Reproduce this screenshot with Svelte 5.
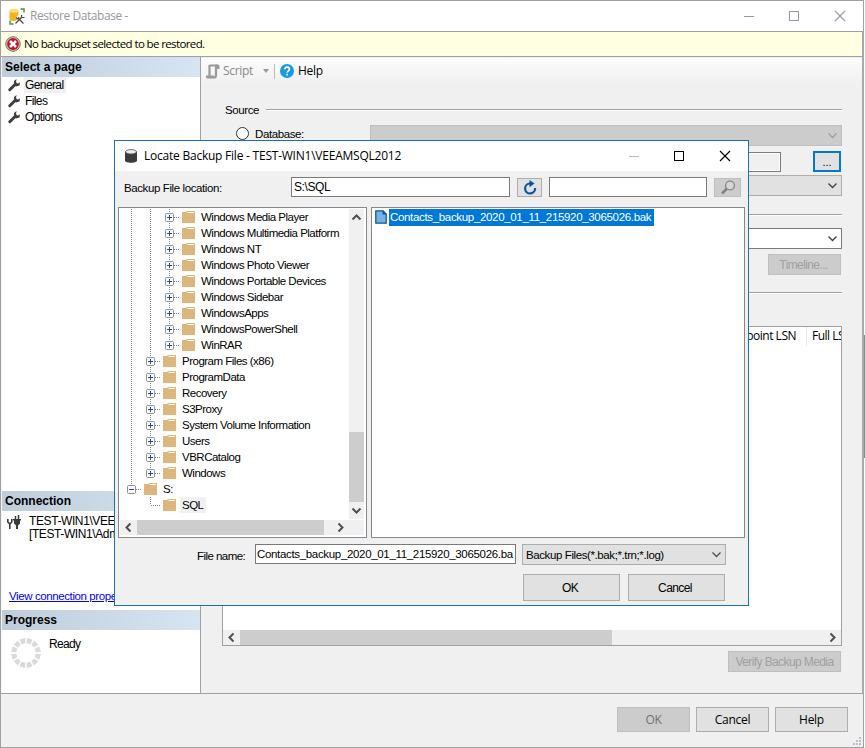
<script lang="ts">
    const pages = ['General', 'Files', 'Options'];
    let selectedPage = 'General';

    // lines: cells left of the folder. v = vertical, + / e = collapsed (middle / last), - = expanded, l = elbow
    const tree = [
        { name: 'Windows Media Player', lines: 'vv+' },
        { name: 'Windows Multimedia Platform', lines: 'vv+' },
        { name: 'Windows NT', lines: 'vv+' },
        { name: 'Windows Photo Viewer', lines: 'vv+' },
        { name: 'Windows Portable Devices', lines: 'vv+' },
        { name: 'Windows Sidebar', lines: 'vv+' },
        { name: 'WindowsApps', lines: 'vv+' },
        { name: 'WindowsPowerShell', lines: 'vv+' },
        { name: 'WinRAR', lines: 'vve' },
        { name: 'Program Files (x86)', lines: 'v+' },
        { name: 'ProgramData', lines: 'v+' },
        { name: 'Recovery', lines: 'v+' },
        { name: 'S3Proxy', lines: 'v+' },
        { name: 'System Volume Information', lines: 'v+' },
        { name: 'Users', lines: 'v+' },
        { name: 'VBRCatalog', lines: 'v+' },
        { name: 'Windows', lines: 've' },
        { name: 'S:', lines: '-' },
        { name: 'SQL', lines: ' l' }
    ];
    let selectedFolder = 'SQL';

    const file = 'Contacts_backup_2020_01_11_215920_3065026.bak';
    const spokes = Array.from({ length: 12 }, (_, i) => i * 30 + 15);
</script>

{#snippet chevron(dir, color = '#505050', w = 2)}
    <svg class="chevron {dir}" width="9" height="9" viewBox="0 0 9 9">
        <path d="M0.5 2.5L4.5 6.5L8.5 2.5" fill="none" stroke={color} stroke-width={w} />
    </svg>
{/snippet}

{#snippet controls(color, minColor)}
    <svg class="controls" width="104" height="12" viewBox="0 0 104 12">
        <path d="M0 6.500H10" stroke={minColor} />
        <rect x="45.500" y="1.500" width="9" height="9" fill="none" stroke={color} />
        <path d="M91 1L101 11M101 1L91 11" stroke={color} stroke-width="1.100" />
    </svg>
{/snippet}

<div class="window">
    <div class="title-bar">
        <svg width="16" height="17" viewBox="0 0 16 17">
            <path d="M0.500 2.500v8.500c0 2.500 9 2.500 9 0v-8.500z" fill="#f5b21a" />
            <ellipse cx="5" cy="2.800" rx="4.500" ry="2" fill="#ffda70" />
            <path d="M11.500 1h3.500v3.500M1 12.500v3.500h3.500" fill="none" stroke="#3c9a47" stroke-width="1.500" />
            <path d="M6.500 15.500l7-7M8 8.500l7 7" stroke="#fff" stroke-width="3.500" />
            <path d="M6.500 15.500l6.500-6.500M9 10l5.500 5.500" stroke="#4a4a4a" stroke-width="1.300" />
            <path d="M12.500 7v2.500h3M7 9.500l2 1.500 1-2" fill="none" stroke="#4a4a4a" stroke-width="1.200" />
        </svg>
        <span class="title-text">Restore Database -</span>
        {@render controls('#999', '#999')}
    </div>

    <div class="message">
        <svg width="16" height="16" viewBox="0 0 16 16">
            <circle cx="8" cy="8" r="7.300" fill="#c8c8c8" stroke="#777" />
            <circle cx="8" cy="8" r="5.900" fill="#c3161c" />
            <path d="M5 5l6 6M11 5l-6 6" stroke="#fff" stroke-width="2.600" />
        </svg>
        <span>No backupset selected to be restored.</span>
    </div>

    <div class="body">
        <aside>
            <h2>Select a page</h2>
            <div class="pages">
                {#each pages as page}
                    <div class="page">
                        <svg width="12" height="13" viewBox="0 0 12 13">
                            <path d="M1.800 10.700L7 5.500" stroke="#3f3f3f" stroke-width="3" stroke-linecap="round" />
                            <path d="M8.500 0L6 2v4l2 1.500 3.500-1 .5-3-2.500 1-1.500-1.200z" fill="#3f3f3f" />
                        </svg>
                        <span class:selected={page === selectedPage}>{page}</span>
                    </div>
                {/each}
            </div>
            <h2>Connection</h2>
            <div class="connection">
                <div class="server">
                    <svg width="14" height="15" viewBox="0 0 14 15">
                        <path d="M0.800 4v3l1.500 1.500h1L4.800 7V4M2.800 8v6" fill="none" stroke="#3a3a3a" stroke-width="1.600" />
                        <path d="M6 4h8v1.500h-1v3l-2 2V14H9v-3.500l-2-2v-3H6z" fill="#3a3a3a" />
                        <path d="M8.500 1v3M11.500 0v4" stroke="#3a3a3a" stroke-width="1.500" />
                    </svg>
                    <div>TEST-WIN1\VEEAMSQL2012<br />[TEST-WIN1\Administrator]</div>
                </div>
                <a href="#properties">View connection properties</a>
            </div>
            <h2>Progress</h2>
            <div class="progress">
                <svg width="30" height="30" viewBox="-15 -15 30 30">
                    {#each spokes as angle}
                        <path d="M-3 -14.600L3 -14.600L1.900 -9.600L-1.900 -9.600Z" fill="#d9d9d9" transform="rotate({angle})" />
                    {/each}
                </svg>
                <span>Ready</span>
            </div>
        </aside>

        <main>
            <div class="toolbar">
                <svg width="15" height="15" viewBox="0 0 15 15">
                    <path d="M4.500 1.500H12M4.500 1v11M11 2v9.500q0 2-2 2H1.500M1 12.500h8" fill="none" stroke="#9a9a9a" stroke-width="2.200" />
                    <path d="M10.500 0.500h2.500q1.500 0 1.500 2V5h-3z" fill="#9a9a9a" />
                </svg>
                <span class="script">Script</span>
                <i class="drop"></i>
                <i class="divider"></i>
                <svg width="14" height="14" viewBox="0 0 14 14">
                    <circle cx="7" cy="7" r="7" fill="#1a9be0" />
                    <path d="M4.800 5.300c0-3 4.600-2.700 4.600 0 0 1.600-2.300 1.500-2.300 3.300M7.100 9.800v1.700" fill="none" stroke="#fff" stroke-width="1.600" />
                </svg>
                <span class="help">Help</span>
            </div>
            <div class="form">
                <div class="section source"><span>Source</span><hr /></div>
                <div class="row database">
                    <i class="radio"></i>
                    <label for="db">Database:</label>
                    <div class="combo disabled" id="db">{@render chevron('down', '#a0a0a0', 1.4)}</div>
                </div>
                <div class="row device">
                    <div class="input"></div>
                    <button class="browse">...</button>
                </div>
                <div class="row"><div class="combo wide">{@render chevron('down', '#404040', 1.3)}</div></div>
                <div class="section destination"><hr /></div>
                <div class="row"><div class="combo wide white">{@render chevron('down', '#404040', 1.3)}</div></div>
                <button class="timeline disabled">Timeline...</button>
                <div class="section plan"><hr /></div>
                <div class="grid">
                    <div class="grid-head">
                        <span class="lsn">Checkpoint LSN</span>
                        <span class="full">Full LSN</span>
                    </div>
                    <div class="hscroll">
                        {@render chevron('left')}
                        <i class="thumb"></i>
                        {@render chevron('right')}
                    </div>
                </div>
                <button class="verify disabled">Verify Backup Media</button>
            </div>
        </main>
    </div>

    <footer>
        <button class="disabled ok">OK</button>
        <button>Cancel</button>
        <button>Help</button>
        <svg class="grip" width="8" height="8" viewBox="0 0 8 8">
            <path d="M6 0h2v2H6zM3 3h2v2H3zM6 3h2v2H6zM0 6h2v2H0zM3 6h2v2H3zM6 6h2v2H6z" fill="#bfbfbf" />
        </svg>
    </footer>
    <i class="edge"></i>
</div>

<div class="dialog">
    <div class="title-bar">
        <svg width="12" height="14" viewBox="0 0 12 14">
            <path d="M0 2.500v9c0 3 12 3 12 0v-9z" fill="#3b3b3b" />
            <ellipse cx="6" cy="2.800" rx="5.500" ry="2.200" fill="#eee" stroke="#555" stroke-width=".8" />
        </svg>
        <span class="title-text">Locate Backup File - TEST-WIN1\VEEAMSQL2012</span>
        {@render controls('#000', '#bbb')}
    </div>
    <div class="location">
        <span>Backup File location:</span>
        <div class="input path">S:\SQL</div>
        <button class="refresh">
            <svg width="14" height="15" viewBox="0 0 14 15">
                <path d="M8 3.500H6.500a5 5 0 1 0 5.600 4.500" fill="none" stroke="#0b539b" stroke-width="2.200" />
                <path d="M6.500 0l5 3.500-5 3.700z" fill="#0b539b" />
            </svg>
        </button>
        <div class="input search"></div>
        <button class="find disabled">
            <svg width="16" height="15" viewBox="0 0 16 15">
                <path d="M2 13.500L7 8.500" stroke="#808080" stroke-width="2.500" />
                <circle cx="10" cy="5.500" r="4.400" fill="#d6d6d6" stroke="#858585" stroke-width="1.300" />
            </svg>
        </button>
    </div>
    <div class="panes">
        <div class="tree">
            <div class="tree-main">
                <div class="nodes">
                    {#each tree as node}
                        <div class="node">
                            {#each node.lines.split('') as cell}
                                <svg class="cell" width="19" height="16" viewBox="0 0 19 16">
                                    {#if cell === 'v' || cell === '+'}
                                        <path class="dots" d="M9.500 0V16" />
                                    {:else if cell === 'e' || cell === '-' || cell === 'l'}
                                        <path class="dots" d="M9.500 0V8" />
                                    {/if}
                                    {#if '+e-l'.includes(cell)}
                                        <path class="dots" d="M10 8.500H19" />
                                    {/if}
                                    {#if '+e-'.includes(cell)}
                                        <rect x="5.500" y="4.500" width="8" height="8" rx="1" fill="#fafafa" stroke="#919191" />
                                        <path d={cell === '-' ? 'M7 8.500H12' : 'M7 8.500H12M9.500 6V11'} stroke="#2b4a91" />
                                    {/if}
                                </svg>
                            {/each}
                            <svg class="folder" width="14" height="12" viewBox="0 0 14 12">
                                <path d="M0 1h4l1-1h8v12H0z" fill="#dcb67a" />
                                <path d="M5.500 1.500H12" stroke="#fff" />
                            </svg>
                            <span class:selected={node.name === selectedFolder}>{node.name}</span>
                        </div>
                    {/each}
                </div>
                <div class="vscroll">
                    {@render chevron('up')}
                    <i class="thumb"></i>
                    {@render chevron('down')}
                </div>
            </div>
            <div class="hscroll">
                {@render chevron('left')}
                <i class="thumb"></i>
                {@render chevron('right')}
            </div>
        </div>
        <div class="files">
            <svg width="12" height="14" viewBox="0 0 12 14">
                <path d="M0.800 0.800H8L11.200 4V13.200H0.800Z" fill="#75b2e6" stroke="#16568f" stroke-width="1.300" />
                <path d="M7.500 0.500V4.500H11.500" fill="#16568f" />
            </svg>
            <span>{file}</span>
        </div>
    </div>
    <div class="name-row">
        <span>File name:</span>
        <div class="input name"><b>{file}</b></div>
        <div class="combo filter"><span>Backup Files(*.bak;*.trn;*.log)</span>{@render chevron('down', '#505050', 1.3)}</div>
    </div>
    <div class="actions">
        <button>OK</button>
        <button>Cancel</button>
    </div>
</div>

<style>
    :global(body) {
        background: #fff;
        overflow: hidden;
    }

    .window, .dialog {
        font: 11.5px/16px 'Liberation Sans', Arial, sans-serif;
        letter-spacing: -0.4px;
        color: #000;
        white-space: nowrap;
    }

    .window *, .dialog * {
        box-sizing: border-box;
    }

    svg {
        display: block;
        flex: none;
    }

    .window {
        box-sizing: border-box;
        position: relative;
        display: flex;
        flex-direction: column;
        width: 864px;
        height: 748px;
        border: 1px solid #a0a0a4;
        background: #f0f0f0;
    }

    .title-bar {
        display: flex;
        align-items: center;
        height: 30px;
        background: #fff;
        padding-left: 8px;
    }

    .title-text {
        font: 12px/16px 'Open Sans', 'Noto Sans', sans-serif;
        letter-spacing: -0.45px;
        color: #999;
        margin-left: 5px;
    }

    .controls {
        margin-left: auto;
        margin-right: 15px;
    }

    .message {
        display: flex;
        align-items: center;
        height: 26px;
        flex: none;
        background: #ffffe1;
        border-top: 1px solid #a0a0a4;
        border-bottom: 1px solid #a0a0a4;
        padding-left: 4px;
        font: 11.5px/16px 'Open Sans', 'Noto Sans', sans-serif;
        letter-spacing: -0.62px;
    }

    .message span {
        margin-left: 3px;
    }

    .body {
        display: flex;
        height: 637px;
        border-bottom: 1px solid #a0a0a4;
        flex: none;
    }

    aside {
        width: 200px;
        background: #fff;
        border-left: 1px solid #f5f5f5;
        border-right: 1px solid #a0a0a4;
        flex: none;
    }

    h2 {
        margin: 0;
        height: 20px;
        padding-left: 3px;
        font: bold 12px/21px 'Liberation Sans', Arial, sans-serif;
        letter-spacing: 0;
        background: linear-gradient(90deg, #bfcddb, #d7e4f2);
    }

    .pages {
        height: 414px;
    }

    .page {
        display: flex;
        align-items: center;
        height: 16px;
        padding-left: 6px;
    }

    .page span {
        margin-left: 4px;
        padding: 0 1px;
        font-size: 12px;
        letter-spacing: -0.6px;
    }

    .page .selected {
        letter-spacing: -0.6px;
        padding-right: 2px;
    }

    .selected {
        background: #f0f0f0;
    }

    .connection {
        height: 99px;
        display: flex;
        flex-direction: column;
        overflow: hidden;
    }

    .server {
        display: flex;
        gap: 8px;
        padding: 4px 0 0 5px;
        font-size: 12px;
        line-height: 13px;
        letter-spacing: -0.4px;
    }

    .connection a {
        margin: auto 0 6px 7px;
        color: #00f;
        line-height: 15px;
    }

    .progress {
        display: flex;
        padding: 8px 0 0 9px;
        gap: 8px;
        font-size: 12px;
        letter-spacing: -0.7px;
    }

    .progress span {
        margin-top: -2px;
    }

    main {
        flex: 1;
        min-width: 0;
        padding-top: 1px;
    }

    .toolbar {
        display: flex;
        align-items: center;
        height: 26px;
        padding-left: 4px;
        background: linear-gradient(#fcfcfc, #f0f0f0);
        font: 12px/16px 'Open Sans', 'Noto Sans', sans-serif;
        letter-spacing: -0.3px;
    }

    .script {
        margin: -1px 0 0 3px;
        color: #888;
        width: 40px;
    }

    .drop {
        border: 3px solid transparent;
        border-top: 4px solid #999;
        border-bottom: 0;
    }

    .divider {
        width: 1px;
        height: 15px;
        background: #bbb;
        margin: 0 5px;
    }

    .help {
        margin: -1px 0 0 4px;
    }

    .form {
        padding: 18px 21px 0 21px;
        display: flex;
        flex-direction: column;
    }

    .section {
        display: flex;
        align-items: center;
        height: 16px;
        padding-left: 3px;
    }

    .source hr {
        margin-left: 7px;
    }

    hr {
        flex: 1;
        height: 2px;
        margin: 0;
        border: 0;
        border-top: 1px solid #a0a0a0;
        border-bottom: 1px solid #fff;
    }

    .destination {
        margin-top: 11px;
        margin-bottom: 5px;
    }

    .plan {
        margin-top: 10px;
        margin-bottom: 25px;
    }

    .row {
        display: flex;
        justify-content: flex-end;
    }

    .database {
        height: 21px;
        align-items: center;
        margin: 7px 0 5px;
        padding-left: 14px;
        justify-content: flex-start;
    }

    .radio {
        width: 13px;
        height: 13px;
        margin-top: -4px;
        border: 1px solid #333;
        border-radius: 50%;
        background: #fff;
    }

    .database label {
        width: 115px;
        margin: -4px 0 0 6px;
    }

    .combo {
        display: flex;
        align-items: center;
        justify-content: flex-end;
        height: 21px;
        padding-right: 4px;
        border: 1px solid #adadad;
        background: #e1e1e1;
    }

    .database .combo {
        flex: 1;
    }

    .combo.disabled {
        background: #ccc;
        border-color: #bfbfbf;
    }

    .combo.wide {
        width: 472px;
    }

    .combo.white {
        background: #fff;
        border-color: #7a7a7a;
    }

    .input {
        height: 20px;
        border: 1px solid #7a7a7a;
        background: #fff;
    }

    .device {
        height: 24px;
        padding-right: 1px;
    }

    .device .input {
        width: 411px;
        margin: 1px 32px 0 0;
        background: #f0f0f0;
        box-shadow: inset 0 0 0 1px #fff;
    }

    button {
        margin: 0;
        padding: 0;
        border: 1px solid #adadad;
        background: #e1e1e1;
        font: 11px/16px 'Liberation Sans', Arial, sans-serif;
        color: #000;
    }

    button.disabled {
        background: #ccc;
        border-color: #bfbfbf;
        color: #a0a0a0;
    }

    .browse {
        width: 28px;
        height: 21px;
        border: 2px solid #0078d7;
    }

    .timeline {
        width: 73px;
        height: 21px;
        align-self: flex-end;
        margin: 5px 1px 0 0;
        padding-right: 2px;
        font-size: 12px;
        letter-spacing: -0.6px;
    }

    .grid {
        display: flex;
        flex-direction: column;
        height: 320px;
        border: 1px solid #a0a0a4;
        background: #fff;
    }

    .grid-head {
        display: flex;
        height: 19px;
        overflow: hidden;
        font: 12px/18px 'Open Sans', 'Noto Sans', sans-serif;
        letter-spacing: -0.5px;
    }

    .lsn {
        flex: none;
        width: 584px;
        padding-right: 10px;
        text-align: right;
        border-right: 1px solid #e5e5e5;
    }

    .full {
        padding-left: 5px;
    }

    .hscroll {
        display: flex;
        align-items: center;
        height: 15px;
        background: #f0f0f0;
        margin-top: auto;
        padding: 0 4px;
    }

    .hscroll .thumb {
        width: 372px;
        height: 15px;
        background: #cdcdcd;
        margin: 0 auto 0 4px;
    }

    .verify {
        width: 113px;
        height: 21px;
        align-self: flex-end;
        margin: 5px 1px 0 0;
        font-size: 12px;
        letter-spacing: -0.6px;
    }

    .chevron {
        overflow: visible;
    }

    .up {
        transform: rotate(180deg);
    }

    .left {
        transform: rotate(90deg);
    }

    .right {
        transform: rotate(-90deg);
    }

    footer {
        display: flex;
        gap: 6px;
        justify-content: flex-end;
        padding: 13px 2px 0 0;
    }

    footer button {
        width: 73px;
        height: 25px;
        font: 12px/16px 'Open Sans', 'Noto Sans', sans-serif;
        letter-spacing: -0.3px;
    }

    footer .ok {
        color: #707070;
    }

    .grip {
        align-self: flex-end;
        margin: 0 0 -13px -1px;
    }

    /* right side shadow and the darker strip next to it */
    .edge {
        position: absolute;
        left: 861px;
        top: 31px;
        width: 3px;
        height: 662px;
        background: linear-gradient(#8a8a90, #8a8a90) 2px 303px / 2px 123px no-repeat,
            linear-gradient(#a9a9ad, #a9a9ad) 0 0 / 2px 100% no-repeat;
    }

    .dialog {
        position: absolute;
        left: 114px;
        top: 140px;
        box-sizing: border-box;
        width: 635px;
        height: 466px;
        border: 1px solid #1a71b5;
        background: #f0f0f0;
    }

    .dialog .title-bar {
        padding-left: 10px;
    }

    .dialog .title-text {
        color: #000;
        margin-left: 7px;
        letter-spacing: -0.23px;
    }

    .location {
        display: flex;
        align-items: center;
        height: 31px;
        padding: 0 0 0 9px;
    }

    .location > span {
        width: 167px;
        padding-top: 2px;
    }

    .location .path {
        width: 219px;
        padding-left: 2px;
        line-height: 18px;
        font-size: 12px;
        letter-spacing: -0.4px;
    }

    .location button {
        display: flex;
        align-items: center;
        justify-content: center;
        height: 19px;
        margin-top: 1px;
    }

    .refresh {
        width: 25px;
        margin: 0 7px;
    }

    .search {
        width: 158px;
    }

    .find {
        width: 27px;
        margin-left: 7px;
    }

    .panes {
        display: flex;
        gap: 4px;
        height: 331px;
        margin: 5px 3px 0 3px;
    }

    .tree {
        width: 249px;
        display: flex;
        flex-direction: column;
        border: 1px solid #828790;
        background: #fff;
        padding: 1px 2px 2px 1px;
    }

    .tree-main {
        display: flex;
        height: 310px;
    }

    .nodes {
        flex: 1;
        padding-left: 2px;
    }

    .node {
        display: flex;
        align-items: center;
        height: 16px;
    }

    .node span {
        margin-left: 3px;
        padding: 0 2px;
        line-height: 16px;
        letter-spacing: -0.5px;
    }

    .folder {
        margin-left: 3px;
    }

    .dots {
        stroke: #808080;
        stroke-dasharray: 1 1;
    }

    .vscroll {
        display: flex;
        flex-direction: column;
        align-items: center;
        width: 15px;
        background: #f0f0f0;
        padding: 4px 0;
    }

    .vscroll .thumb {
        width: 15px;
        height: 70px;
        margin: auto 0 4px;
        background: #cdcdcd;
    }

    .tree .hscroll {
        padding-right: 19px;
    }

    .tree .hscroll .thumb {
        width: 187px;
    }

    .files {
        width: 374px;
        display: flex;
        align-items: flex-start;
        padding: 1px 0 0 3px;
        border: 1px solid #828790;
        background: #fff;
    }

    .files svg {
        margin-top: 1px;
    }

    .files span {
        height: 17px;
        margin-left: 2px;
        padding: 0 3px 0 1px;
        background: #0078d7;
        color: #fff;
        line-height: 17px;
        letter-spacing: -0.33px;
    }

    .name-row {
        display: flex;
        margin-top: 6px;
        padding-left: 82px;
    }

    .name-row > span {
        width: 58px;
        padding-top: 4px;
        letter-spacing: -0.55px;
    }

    .name {
        width: 261px;
        margin-right: 6px;
        padding: 0 2px 0 1px;
    }

    .name b {
        display: block;
        overflow: hidden;
        font-weight: normal;
        line-height: 18px;
        letter-spacing: -0.33px;
    }

    .filter {
        width: 204px;
        justify-content: space-between;
        padding-left: 3px;
    }

    .actions {
        display: flex;
        gap: 8px;
        margin: 9px 0 0 408px;
    }

    .actions button {
        width: 97px;
        height: 27px;
        padding-right: 3px;
        font-size: 12px;
        letter-spacing: -0.6px;
    }
</style>
